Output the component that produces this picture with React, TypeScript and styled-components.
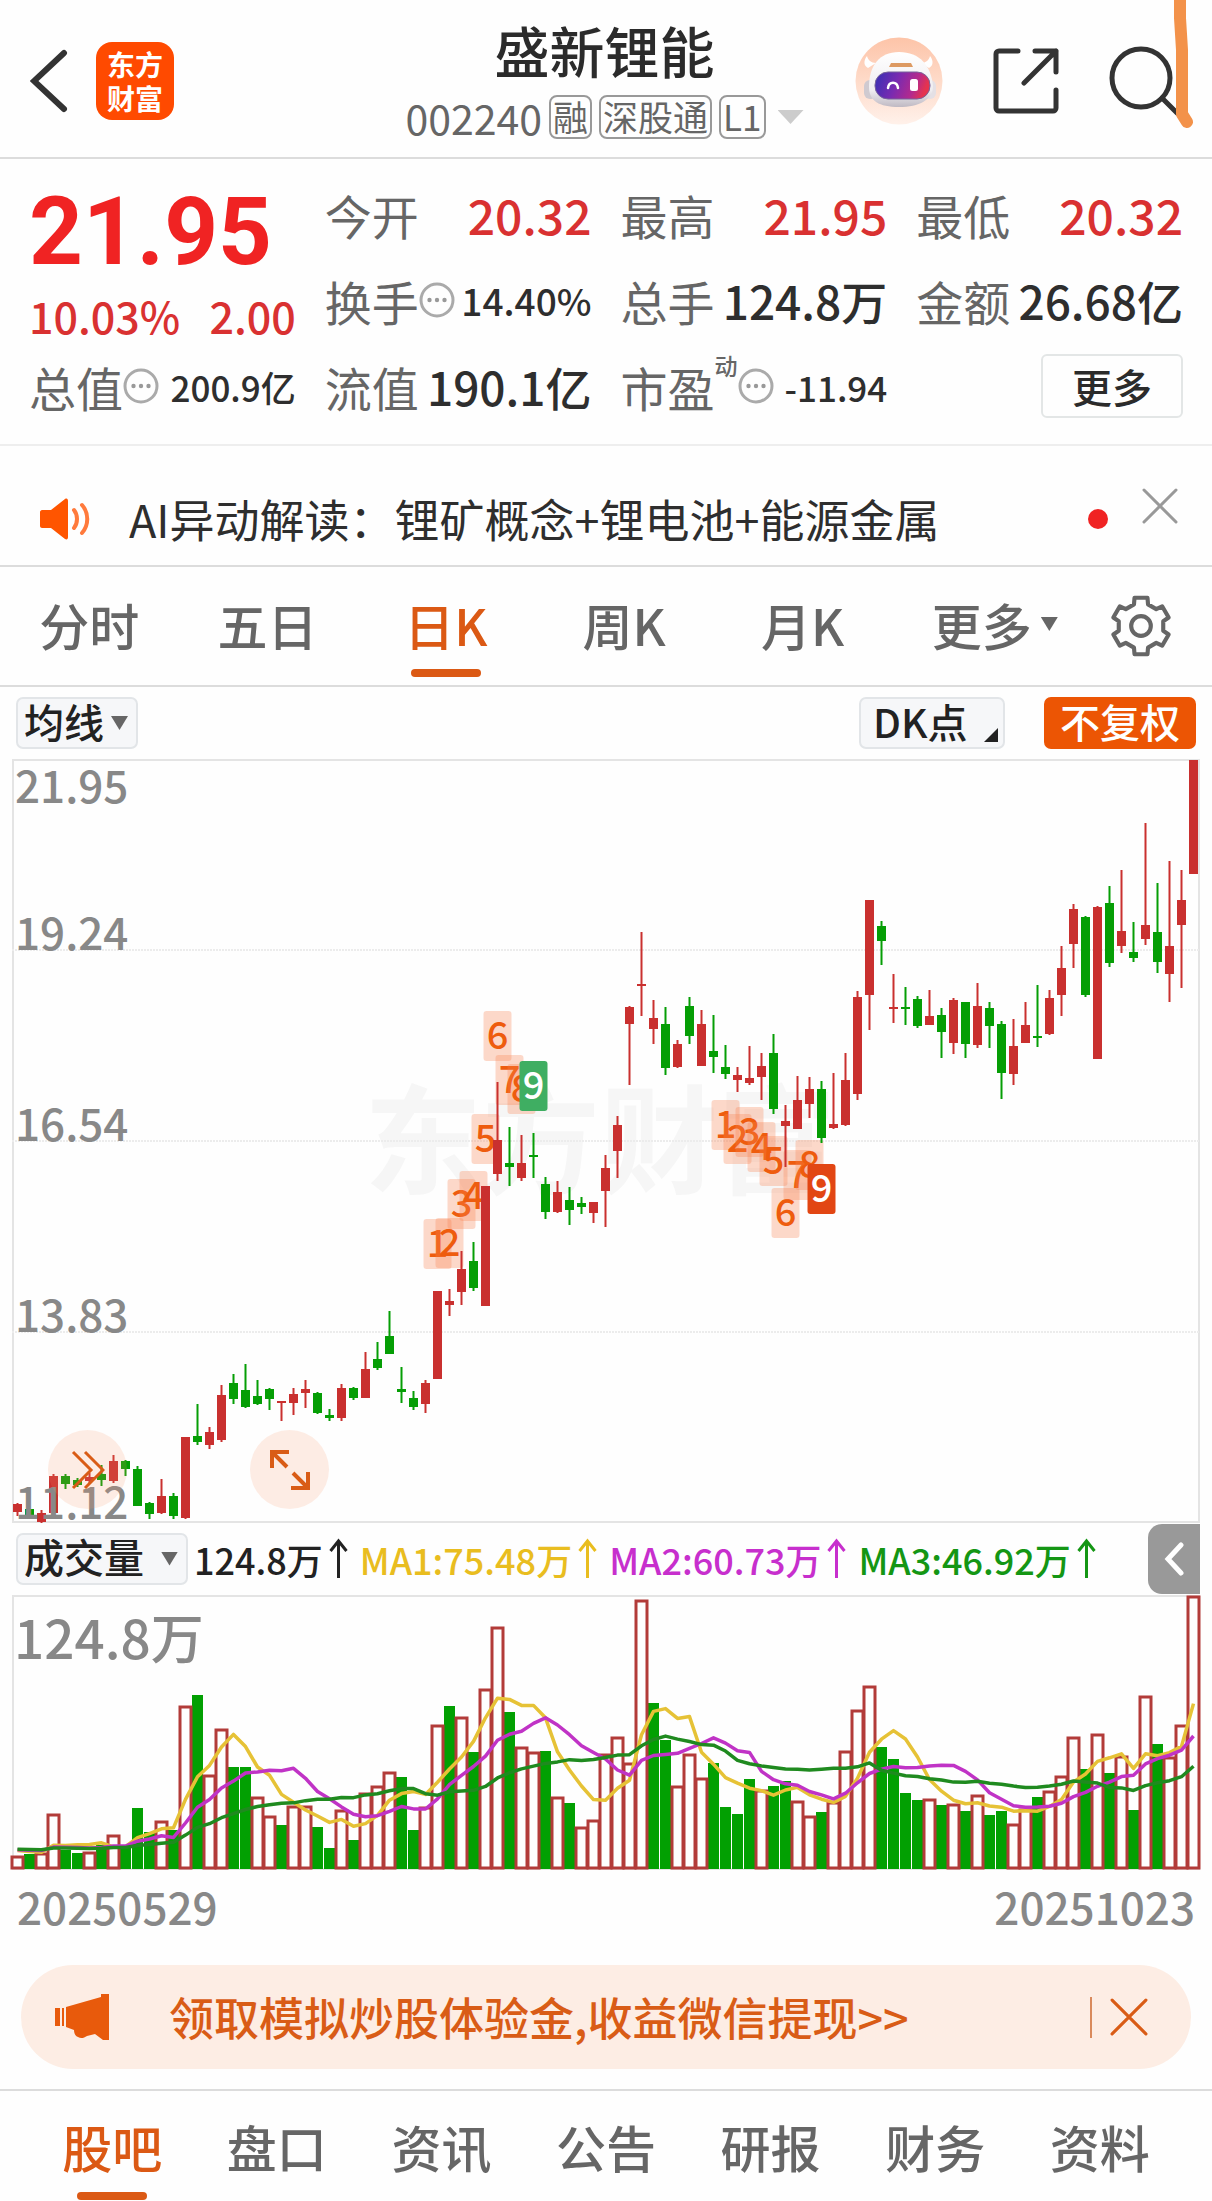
import React, { useState } from "react";
import styled, { createGlobalStyle } from "styled-components";

const GlobalStyle = createGlobalStyle`
  *, *::before, *::after { box-sizing: border-box; }
  body {
    margin: 0;
    background: #fefefe;
    color: #333;
    font-family: "Noto Sans CJK SC", "Noto Sans", sans-serif;
    font-weight: 500;
  }
  button, select {
    margin: 0;
    padding: 0;
    border: 0;
    background: none;
    color: inherit;
    font: inherit;
    cursor: pointer;
  }
  svg { display: block; }
`;

const RED = "#c9302f";
const GREEN = "#059e05";
const ORANGE = "#e85a0c";

/* ---------- data ---------- */

// [rising, high, low, body top, body bottom] in chart units, 0 at the top
type Candle = [0 | 1, number, number, number, number];

const candles: Candle[] = [
  [1, 744, 757, 745, 753], [0, 750, 759, 750, 758], [1, 751, 764, 754, 763], [1, 715, 754, 717, 754],
  [0, 715, 730, 717, 725], [0, 719, 728, 721, 726], [1, 714, 724, 718, 722], [0, 706, 727, 715, 721],
  [1, 696, 724, 702, 722], [0, 701, 717, 702, 710], [0, 707, 747, 710, 747], [0, 743, 760, 744, 755],
  [1, 720, 755, 737, 754], [0, 734, 760, 737, 757], [1, 678, 760, 678, 759], [0, 645, 686, 677, 683],
  [1, 668, 690, 673, 686], [1, 626, 683, 636, 681], [0, 615, 645, 624, 640], [0, 605, 649, 631, 648],
  [0, 621, 646, 637, 645], [0, 629, 651, 630, 640], [1, 642, 662, 642, 644], [1, 629, 656, 635, 644],
  [1, 621, 649, 630, 634], [0, 633, 655, 634, 654], [0, 650, 662, 656, 659], [1, 625, 662, 629, 659],
  [0, 628, 641, 629, 639], [1, 593, 639, 610, 639], [0, 583, 611, 600, 609], [0, 552, 595, 577, 595],
  [0, 608, 644, 630, 633], [0, 632, 651, 639, 648], [1, 621, 654, 624, 645], [1, 532, 620, 532, 620],
  [1, 530, 557, 542, 546], [1, 492, 546, 510, 533], [0, 483, 532, 502, 529], [1, 427, 547, 427, 547],
  [1, 323, 422, 381, 415], [0, 368, 427, 404, 408], [1, 376, 422, 404, 419], [0, 374, 419, 396, 398],
  [0, 418, 460, 425, 453], [1, 422, 454, 433, 453], [0, 428, 466, 441, 451], [0, 438, 455, 444, 448],
  [1, 443, 464, 443, 454], [1, 396, 468, 409, 432], [1, 357, 419, 366, 392], [1, 247, 326, 248, 265],
  [1, 173, 257, 225, 227], [1, 241, 285, 259, 270], [0, 248, 316, 265, 309], [1, 281, 309, 285, 308],
  [0, 238, 285, 247, 277], [1, 251, 307, 265, 307], [0, 256, 314, 292, 298], [0, 286, 320, 308, 315],
  [1, 308, 333, 316, 321], [1, 287, 326, 319, 324], [1, 294, 341, 307, 318], [0, 275, 355, 294, 350],
  [1, 346, 408, 362, 367], [1, 317, 370, 341, 370], [1, 318, 359, 330, 345], [0, 322, 384, 330, 379],
  [1, 314, 370, 365, 369], [1, 294, 367, 321, 366], [1, 232, 341, 238, 335], [1, 141, 271, 141, 236],
  [0, 162, 206, 167, 182], [1, 215, 264, 248, 250], [0, 228, 266, 248, 249], [0, 237, 269, 240, 267],
  [1, 231, 266, 257, 266], [0, 249, 299, 256, 273], [1, 239, 295, 241, 284], [0, 243, 299, 243, 285],
  [1, 224, 289, 247, 286], [0, 243, 289, 249, 267], [0, 262, 340, 265, 314], [1, 260, 326, 287, 315],
  [1, 243, 284, 266, 284], [0, 226, 288, 277, 279], [1, 231, 276, 239, 275], [1, 187, 257, 209, 236],
  [1, 145, 209, 150, 185], [0, 157, 238, 158, 236], [1, 147, 300, 148, 300], [0, 127, 208, 144, 204],
  [1, 111, 194, 172, 187], [0, 163, 203, 193, 199], [1, 64, 186, 166, 180], [0, 124, 214, 173, 203],
  [1, 102, 243, 187, 215], [1, 111, 229, 141, 166], [1, 1, 115, 1, 115],
];

const volumes = [
  13, 15, 16, 55, 19, 16, 17, 24, 34, 21, 61, 37, 48, 39, 163, 174, 94, 140, 102, 102,
  72, 53, 44, 63, 63, 42, 21, 59, 29, 76, 83, 97, 92, 39, 62, 144, 163, 152, 117, 180,
  242, 157, 122, 117, 118, 72, 66, 42, 49, 115, 132, 106, 269, 166, 129, 83, 115, 91, 106, 62,
  55, 90, 79, 83, 88, 68, 53, 57, 67, 118, 159, 183, 122, 110, 76, 69, 70, 64, 65, 58,
  74, 54, 58, 45, 60, 72, 78, 93, 132, 100, 135, 96, 113, 59, 173, 125, 112, 144, 273,
];

// Days whose volume bar is filled green (closed below the day before)
const fallingDays = new Set([
  1, 4, 5, 7, 9, 10, 11, 13, 15, 18, 19, 22, 25, 26, 28, 32, 33, 36, 38, 41, 44, 46, 53, 54,
  58, 59, 60, 61, 63, 64, 67, 72, 73, 74, 75, 77, 79, 81, 82, 85, 89, 91, 93, 95,
]);

// [day, count, top]
const markers: [number, number, number][] = [
  [35, 1, 460], [36, 2, 459], [37, 3, 420], [38, 4, 412], [39, 5, 355], [40, 6, 252], [41, 7, 296],
  [42, 8, 305], [43, 9, 302],
  [59, 1, 341], [60, 2, 355], [61, 3, 348], [62, 4, 363], [63, 5, 377], [64, 6, 429], [65, 7, 391],
  [66, 8, 381], [67, 9, 405],
];

const priceLabels: [string, number][] = [
  ["21.95", 44], ["19.24", 191], ["16.54", 382], ["13.83", 573], ["11.12", 760],
];

const dayX = (i: number) => 5.5 + 12 * i;

const averageLine = (span: number) =>
  volumes
    .map((_, i) => {
      let sum = 0;
      for (let k = i - span + 1; k <= i; k++) sum += k < 0 ? 20 : volumes[k];
      return `${dayX(i)},${274 - sum / span}`;
    })
    .join(" ");

/* ---------- styles ---------- */

const Page = styled.main`
  position: relative;
  overflow: hidden;
`;

const Header = styled.header`
  display: grid;
  grid-template-columns: 1fr auto 1fr;
  align-items: center;
  height: 159px;
  padding: 5px 33px 0 30px;
  border-bottom: 2px solid #dcdcdc;
`;

const HeaderSide = styled.div<{ $end?: boolean }>`
  display: flex;
  align-items: center;
  justify-content: ${(p) => (p.$end ? "flex-end" : "flex-start")};
  gap: ${(p) => (p.$end ? 49 : 26)}px;
`;

const IconButton = styled.button`
  display: flex;
  align-items: center;
  justify-content: center;
  flex: none;
`;

const Logo = styled.a`
  display: grid;
  place-items: center;
  width: 78px;
  height: 78px;
  border-radius: 16px;
  background: #ff4a00;
  color: #fff;
  font-size: 28px;
  font-weight: 700;
  line-height: 34px;
  text-align: center;
  text-decoration: none;
`;

const TitleBlock = styled.div`
  display: flex;
  flex-direction: column;
  align-items: center;
`;

const Title = styled.h1`
  margin: 0;
  color: #2b2b2b;
  font-size: 55px;
  font-weight: 500;
  line-height: 68px;
`;

const CodeRow = styled.div`
  display: flex;
  align-items: center;
  gap: 7px;
  height: 60px;
  margin-top: 4px;
  color: #666;
  font-size: 41px;
  font-weight: 400;
  line-height: 60px;
`;

const Tag = styled.span`
  height: 44px;
  padding: 0 2px;
  border: 2px solid #999;
  border-radius: 8px;
  font-size: 35px;
  line-height: 38px;
`;

const Caret = styled.span<{ $w: number; $color: string }>`
  flex: none;
  width: ${(p) => p.$w}px;
  height: 14px;
  background: ${(p) => p.$color};
  clip-path: polygon(0 0, 100% 0, 50% 100%);
`;

const CodeCaret = styled(Caret)`
  margin-left: 5px;
`;

const Marker = styled.svg`
  position: absolute;
  top: 0;
  right: 18px;
`;

const Quote = styled.section`
  display: grid;
  grid-template-columns: repeat(4, 1fr);
  grid-auto-rows: 86px;
  column-gap: 29px;
  height: 287px;
  padding: 12px 29px 0;
  border-bottom: 2px solid #eee;
`;

const PriceCell = styled.div`
  grid-row: span 2;
  color: #d93131;
`;

const Price = styled.div`
  height: 114px;
  color: #f02323;
  font-family: Roboto, "Noto Sans CJK SC", sans-serif;
  font-size: 94px;
  font-weight: 700;
  line-height: 122px;
`;

const Change = styled.div`
  display: flex;
  justify-content: space-between;
  font-size: 43px;
  line-height: 60px;
`;

const Cell = styled.div`
  display: flex;
  align-items: center;
  white-space: nowrap;
`;

const Label = styled.span`
  color: #666;
  font-size: 47px;
  font-weight: 400;
`;

const Dynamic = styled.sup`
  align-self: flex-start;
  color: #666;
  font-size: 23px;
  line-height: 44px;
`;

const Value = styled.span<{ $size: number; $up?: boolean }>`
  margin-left: auto;
  color: ${(p) => (p.$up ? "#d93131" : "#2e2e2e")};
  font-size: ${(p) => p.$size}px;
`;

const MoreButton = styled.button`
  width: 142px;
  height: 64px;
  margin-left: auto;
  border: 2px solid #e3e6e6;
  border-radius: 6px;
  color: #2b2b2b;
  font-size: 40px;
  line-height: 56px;
`;

const Notice = styled.section`
  display: flex;
  align-items: center;
  height: 121px;
  padding: 26px 34px 0 39px;
  border-bottom: 2px solid #dcdcdc;
`;

const NoticeText = styled.a`
  flex: 1;
  margin-left: 36px;
  color: #2e2e2e;
  font-size: 45px;
  font-weight: 400;
  line-height: 64px;
  text-decoration: none;
`;

const Dot = styled.span`
  width: 20px;
  height: 20px;
  margin-right: 34px;
  border-radius: 50%;
  background: #f02323;
`;

const NoticeClose = styled(IconButton)`
  align-self: flex-start;
  margin-top: 16px;
`;

const PeriodBar = styled.nav`
  display: grid;
  grid-template-columns: repeat(6, 1fr) 142px;
  height: 120px;
  border-bottom: 2px solid #dcdcdc;
`;

const TabButton = styled.button<{ $active?: boolean; $low?: boolean }>`
  position: relative;
  display: flex;
  flex: 1 1 0;
  align-items: center;
  justify-content: center;
  gap: 9px;
  color: ${(p) => (p.$active ? "#db5914" : "#666")};
  font-size: 50px;
  line-height: 66px;

  &::after {
    content: "";
    position: absolute;
    bottom: ${(p) => (p.$low ? 1 : 8)}px;
    left: 50%;
    width: 70px;
    height: 8px;
    margin-left: -35px;
    border-radius: 4px;
    background: ${(p) => (p.$active ? "#db5914" : "transparent")};
  }
`;

const PeriodTab = styled(TabButton)`
  padding-bottom: 4px;
`;

const MoreTab = styled(PeriodTab)`
  padding-left: 28px;
`;

const Tools = styled.div`
  display: flex;
  align-items: center;
  height: 72px;
  padding: 0 16px;
`;

const Picker = styled.label<{ $w: number }>`
  position: relative;
  display: flex;
  align-items: center;
  width: ${(p) => p.$w}px;
  height: 52px;
  border: 2px solid #e2e5e8;
  border-radius: 7px;
  background: #f6f7f9;
  color: #222;

  select {
    width: 100%;
    height: 48px;
    padding: 0 0 5px 6px;
    font-size: 40px;
    line-height: 42px;
    appearance: none;
    outline: none;
  }
  ${Caret} {
    position: absolute;
    right: 8px;
    pointer-events: none;
  }
`;

const DkButton = styled.button`
  position: relative;
  width: 146px;
  height: 52px;
  margin-left: auto;
  padding: 0 0 5px 12px;
  border: 2px solid #e2e5e8;
  border-radius: 7px;
  background: #f6f7f9;
  color: #222;
  font-size: 40px;
  line-height: 42px;
  text-align: left;

  &::after {
    content: "";
    position: absolute;
    right: 5px;
    bottom: 5px;
    width: 14px;
    height: 14px;
    background: #222;
    clip-path: polygon(100% 0, 100% 100%, 0 100%);
  }
`;

const AdjustButton = styled.button`
  width: 152px;
  height: 52px;
  margin-left: 39px;
  padding-bottom: 5px;
  border-radius: 7px;
  background: #ec5504;
  color: #fff;
  font-size: 40px;
  line-height: 46px;
`;

const ChartBox = styled.section`
  position: relative;
  margin: 0 12px;

  > svg {
    width: 100%;
    height: auto;
    overflow: visible;
  }
`;

const RoundButton = styled.button<{ $left: number }>`
  position: absolute;
  bottom: 13px;
  left: ${(p) => p.$left}px;
  display: grid;
  place-items: center;
  width: 79px;
  height: 79px;
  border-radius: 50%;
  background: rgba(250, 150, 100, 0.17);
`;

const VolumeBar = styled.div`
  display: flex;
  align-items: center;
  height: 73px;
  padding: 0 12px 0 16px;
`;

const Stats = styled.div`
  display: flex;
  flex: 1;
  gap: 12px;
  margin-left: 6px;
  white-space: nowrap;
`;

const Stat = styled.span<{ $color: string }>`
  display: flex;
  align-items: center;
  gap: 6px;
  color: ${(p) => p.$color};
  font-size: 36px;
  line-height: 52px;
`;

const Collapse = styled(IconButton)`
  width: 52px;
  height: 70px;
  border-radius: 14px 0 0 14px;
  background: #999;
`;

const Dates = styled.div`
  display: flex;
  justify-content: space-between;
  padding: 0 17px;
  color: #888;
  font-size: 44px;
  line-height: 72px;
`;

const Promo = styled.aside`
  display: flex;
  align-items: center;
  height: 104px;
  margin: 23px 21px 20px;
  padding: 0 43px 0 34px;
  border-radius: 52px;
  background: #fdede4;
  color: #d95c16;
`;

const PromoText = styled.a`
  flex: 1;
  margin-left: 60px;
  color: inherit;
  font-size: 45px;
  line-height: 64px;
  text-decoration: none;
`;

const Divider = styled.span`
  width: 2px;
  height: 41px;
  margin-right: 18px;
  background: #d98a5c;
`;

const BottomTabs = styled.nav`
  display: flex;
  height: 112px;
  padding: 0 30px;
  border-top: 2px solid #dcdcdc;
`;

/* ---------- icons ---------- */

const Cross = ({ size, color }: { size: number; color: string }) => (
  <svg width={size} height={size} viewBox="0 0 36 36" stroke={color} strokeWidth="3" strokeLinecap="round">
    <path d="M2 2 34 34M34 2 2 34" />
  </svg>
);

const InfoIcon = () => (
  <svg width="36" height="36" viewBox="0 0 36 36">
    <circle cx="18" cy="18" r="16" fill="none" stroke="#aaa" strokeWidth="3" />
    <circle cx="10.500" cy="18" r="2.200" fill="#999" />
    <circle cx="18" cy="18" r="2.200" fill="#999" />
    <circle cx="25.500" cy="18" r="2.200" fill="#999" />
  </svg>
);

const UpArrow = () => (
  <svg width="19" height="41" viewBox="0 0 19 41" fill="none" stroke="currentColor" strokeWidth="3">
    <path d="M9.500 40V3M1.500 13 9.500 3l8 10" />
  </svg>
);

const Robot = () => (
  <svg width="88" height="88" viewBox="0 0 88 88">
    <defs>
      <linearGradient id="halo" x1="0" y1="0" x2="0" y2="1">
        <stop offset="0" stopColor="#fdc4a8" />
        <stop offset="1" stopColor="#fff1ea" />
      </linearGradient>
      <linearGradient id="visor" x1="0" y1="0" x2="1" y2="0.200">
        <stop offset="0" stopColor="#3530b5" />
        <stop offset="0.450" stopColor="#7a2bb0" />
        <stop offset="0.800" stopColor="#b52a8c" />
        <stop offset="1" stopColor="#e5334f" />
      </linearGradient>
      <linearGradient id="shell" x1="0" y1="0" x2="0" y2="1">
        <stop offset="0" stopColor="#ffffff" />
        <stop offset="0.700" stopColor="#efedf0" />
        <stop offset="1" stopColor="#bfb9c3" />
      </linearGradient>
    </defs>
    <circle cx="44" cy="44" r="43.500" fill="url(#halo)" />
    <path d="M12 19c-4 5-3 10 1 12l8-5c-5 0-8-3-9-7ZM75 19c4 5 3 10-1 12l-8-5c5 0 8-3 9-7Z" fill="#fff" />
    <rect x="9" y="43" width="13" height="19" rx="6" fill="#cfcad0" />
    <rect x="68" y="43" width="13" height="19" rx="6" fill="#e4e0e5" />
    <path d="M44 15c21 0 32 14 34 34 0 14-14 21-34 21S14 64 14 50C14 29 24 15 44 15Z" fill="url(#shell)" />
    <path d="M36 26h20l2 4H34Z" fill="#dd9a62" />
    <rect x="20" y="35" width="55" height="27" rx="13" fill="url(#visor)" stroke="#77639a" strokeWidth="1" />
    <path d="M33 51c1-7 9-7 10 0" fill="none" stroke="#fff" strokeWidth="2.500" strokeLinecap="round" />
    <rect x="55" y="42" width="8" height="12" rx="2.500" fill="#fff" />
  </svg>
);

const teeth = Array.from({ length: 6 }, (_, k) => {
  const point = (deg: number, r: number) => {
    const a = ((deg + k * 60 - 90) * Math.PI) / 180;
    return `${30 + r * Math.cos(a)} ${30 + r * Math.sin(a)}`;
  };
  return `${k ? "L" : "M"}${point(-13, 28)}L${point(13, 28)}L${point(18, 22)}L${point(42, 22)}`;
}).join("");

const Gear = () => (
  <svg width="62" height="62" viewBox="0 0 60 60" fill="none" stroke="#666" strokeWidth="4" strokeLinejoin="round">
    <path d={`${teeth}Z`} />
    <circle cx="30" cy="30" r="9.500" />
  </svg>
);

/* ---------- charts ---------- */

const PriceChart = () => (
  <svg viewBox="0 0 1188 763" role="img" aria-label="日K线图">
    <rect x="1" y="1" width="1186" height="762" fill="none" stroke="#e4e4e4" strokeWidth="2" />
    <text x="352" y="426" fontSize="118" fontWeight="700" fill="#f6f6f6">东方财富</text>
    {[191, 382, 573].map((y) => (
      <line key={y} x1="0" x2="1188" y1={y} y2={y} stroke="#ececec" strokeWidth="2" strokeDasharray="2 1" />
    ))}
    {markers.map(([day, count, top]) => {
      const last = count === 9;
      const fill = !last ? "rgba(250,130,80,0.3)" : day < 50 ? "#3fae62" : "#e24613";
      return (
        <g key={day}>
          <rect x={dayX(day) - 14} y={top} width="28" height="50" rx="3" fill={fill} />
          <text x={dayX(day)} y={top + 38} fontSize="38" textAnchor="middle" fill={last ? "#fff" : "#ee5c0e"}>
            {count}
          </text>
        </g>
      );
    })}
    {candles.map(([up, high, low, top, bottom], i) => (
      <g key={i} fill={up ? RED : GREEN}>
        <rect x={dayX(i) - 1} y={high} width="2" height={low - high} />
        <rect x={dayX(i) - 4.5} y={top} width="9" height={Math.max(bottom - top, 2)} />
      </g>
    ))}
    {priceLabels.map(([label, y]) => (
      <text key={label} x="3" y={y} fontSize="44" fill="#888">{label}</text>
    ))}
  </svg>
);

const VolumeChart = () => (
  <svg viewBox="0 0 1188 275" role="img" aria-label="成交量图">
    <rect x="1" y="1" width="1186" height="273" fill="none" stroke="#e4e4e4" strokeWidth="2" />
    <text x="2" y="64" fontSize="53" fill="#888">124.8万</text>
    {volumes.map((v, i) =>
      fallingDays.has(i) ? <rect key={i} x={dayX(i) - 5.5} y={274 - v} width="11" height={v} fill="#02a002" /> : null,
    )}
    {volumes.map((v, i) =>
      fallingDays.has(i) ? null : (
        <rect key={i} x={dayX(i) - 5.5} y={275 - v} width="11" height={v - 2} fill="#fefefe" stroke="#b23b39" strokeWidth="3" />
      ),
    )}
    <g fill="none" strokeWidth="3.5" strokeLinejoin="round">
      <polyline points={averageLine(5)} stroke="#e6c236" />
      <polyline points={averageLine(10)} stroke="#c033c6" />
      <polyline points={averageLine(20)} stroke="#1f8a1f" />
    </g>
  </svg>
);

/* ---------- page ---------- */

const periods = ["分时", "五日", "日K", "周K", "月K"];
const sections = ["股吧", "盘口", "资讯", "公告", "研报", "财务", "资料"];

export default function App() {
  const [period, setPeriod] = useState("日K");
  const [section, setSection] = useState("股吧");

  return (
    <Page>
      <GlobalStyle />
      <Header>
        <HeaderSide>
          <IconButton aria-label="返回">
            <svg width="40" height="66" viewBox="0 0 40 66" fill="none" stroke="#333" strokeWidth="6" strokeLinecap="round">
              <path d="M34 5 4 33l30 28" />
            </svg>
          </IconButton>
          <Logo href="#home">东方<br />财富</Logo>
        </HeaderSide>
        <TitleBlock>
          <Title>盛新锂能</Title>
          <CodeRow>
            002240<Tag>融</Tag><Tag>深股通</Tag><Tag>L1</Tag>
            <CodeCaret $w={26} $color="#ccc" />
          </CodeRow>
        </TitleBlock>
        <HeaderSide $end>
          <IconButton aria-label="智能助手"><Robot /></IconButton>
          <IconButton aria-label="分享">
            <svg width="68" height="68" viewBox="0 0 68 68" fill="none" stroke="#333" strokeWidth="5" strokeLinecap="round" strokeLinejoin="round">
              <path d="M26 4H7a3 3 0 0 0-3 3v54a3 3 0 0 0 3 3h54a3 3 0 0 0 3-3V43M43 4h21v21M64 4 32 36" />
            </svg>
          </IconButton>
          <IconButton aria-label="搜索">
            <svg width="70" height="70" viewBox="0 0 70 70" fill="none" stroke="#333" strokeWidth="5" strokeLinecap="round">
              <circle cx="32" cy="32" r="29" />
              <path d="M53 52 68 67" />
            </svg>
          </IconButton>
        </HeaderSide>
      </Header>
      <Marker width="26" height="130" viewBox="0 0 26 130" fill="none" stroke="#f3924a" strokeWidth="12" strokeLinecap="round" strokeLinejoin="round">
        <path d="M12-8 12 18 14 50v64l5 8" />
      </Marker>

      <Quote>
        <PriceCell>
          <Price>21.95</Price>
          <Change><span>10.03%</span><span>2.00</span></Change>
        </PriceCell>
        <Cell><Label>今开</Label><Value $size={48} $up>20.32</Value></Cell>
        <Cell><Label>最高</Label><Value $size={48} $up>21.95</Value></Cell>
        <Cell><Label>最低</Label><Value $size={48} $up>20.32</Value></Cell>
        <Cell><Label>换手</Label><InfoIcon /><Value $size={37}>14.40%</Value></Cell>
        <Cell><Label>总手</Label><Value $size={46}>124.8万</Value></Cell>
        <Cell><Label>金额</Label><Value $size={46}>26.68亿</Value></Cell>
        <Cell><Label>总值</Label><InfoIcon /><Value $size={35}>200.9亿</Value></Cell>
        <Cell><Label>流值</Label><Value $size={46}>190.1亿</Value></Cell>
        <Cell><Label>市盈</Label><Dynamic>动</Dynamic><InfoIcon /><Value $size={35}>-11.94</Value></Cell>
        <Cell><MoreButton>更多</MoreButton></Cell>
      </Quote>

      <Notice>
        <svg width="54" height="44" viewBox="0 0 54 44">
          <path d="M3 13h9L26 2c2-1 3 0 3 2v36c0 2-1 3-3 2L12 31H3c-1 0-2-1-2-2V15c0-1 1-2 2-2Z" fill="#ff5500" />
          <path d="M35 13c4 5 4 13 0 18M43 8c7 8 7 20 0 28" fill="none" stroke="#ff7a3c" strokeWidth="4" strokeLinecap="round" />
        </svg>
        <NoticeText href="#ai">AI异动解读：锂矿概念+锂电池+能源金属</NoticeText>
        <Dot />
        <NoticeClose aria-label="关闭"><Cross size={36} color="#999" /></NoticeClose>
      </Notice>

      <PeriodBar>
        {periods.map((name) => (
          <PeriodTab key={name} $active={name === period} onClick={() => setPeriod(name)}>{name}</PeriodTab>
        ))}
        <MoreTab>更多<Caret $w={17} $color="#666" /></MoreTab>
        <IconButton aria-label="设置"><Gear /></IconButton>
      </PeriodBar>

      <Tools>
        <Picker $w={122}>
          <select aria-label="主图指标" defaultValue="均线"><option>均线</option></select>
          <Caret $w={17} $color="#666" />
        </Picker>
        <DkButton>DK点</DkButton>
        <AdjustButton>不复权</AdjustButton>
      </Tools>

      <ChartBox>
        <PriceChart />
        <RoundButton $left={36} aria-label="快进">
          <svg width="34" height="40" viewBox="0 0 34 40" fill="none" stroke="#d95c16" strokeWidth="3">
            <path d="M2 2 20 20 2 38M14 2 32 20 14 38" />
          </svg>
        </RoundButton>
        <RoundButton $left={238} aria-label="全屏">
          <svg width="40" height="40" viewBox="0 0 40 40" fill="none" stroke="#d95c16" strokeWidth="4">
            <path d="M2 18V2h17M2 2l15 15M38 22v16H21M38 38 23 23" />
          </svg>
        </RoundButton>
      </ChartBox>

      <VolumeBar>
        <Picker $w={172}>
          <select aria-label="副图指标" defaultValue="成交量"><option>成交量</option></select>
          <Caret $w={17} $color="#666" />
        </Picker>
        <Stats>
          <Stat $color="#222">124.8万<UpArrow /></Stat>
          <Stat $color="#e9bd1f">MA1:75.48万<UpArrow /></Stat>
          <Stat $color="#c72fcd">MA2:60.73万<UpArrow /></Stat>
          <Stat $color="#149614">MA3:46.92万<UpArrow /></Stat>
        </Stats>
        <Collapse aria-label="收起">
          <svg width="20" height="34" viewBox="0 0 20 34" fill="none" stroke="#fff" strokeWidth="5" strokeLinecap="round">
            <path d="M17 3 4 17l13 14" />
          </svg>
        </Collapse>
      </VolumeBar>

      <ChartBox>
        <VolumeChart />
      </ChartBox>
      <Dates><span>20250529</span><span>20251023</span></Dates>

      <Promo>
        <svg width="54" height="46" viewBox="0 0 54 46" fill={ORANGE}>
          <path d="M0 14h5v18H0ZM7 14h2v18H7Z" />
          <path d="M11 13 46 3V0h8v46h-6l-8-6-8 2c-3 2-6 3-9 1-3-1-4-4-4-7l-8-3Z" />
        </svg>
        <PromoText href="#promo">领取模拟炒股体验金,收益微信提现&gt;&gt;</PromoText>
        <Divider />
        <IconButton aria-label="关闭"><Cross size={38} color="#d95c16" /></IconButton>
      </Promo>

      <BottomTabs>
        {sections.map((name) => (
          <TabButton key={name} $low $active={name === section} onClick={() => setSection(name)}>{name}</TabButton>
        ))}
      </BottomTabs>
    </Page>
  );
}
